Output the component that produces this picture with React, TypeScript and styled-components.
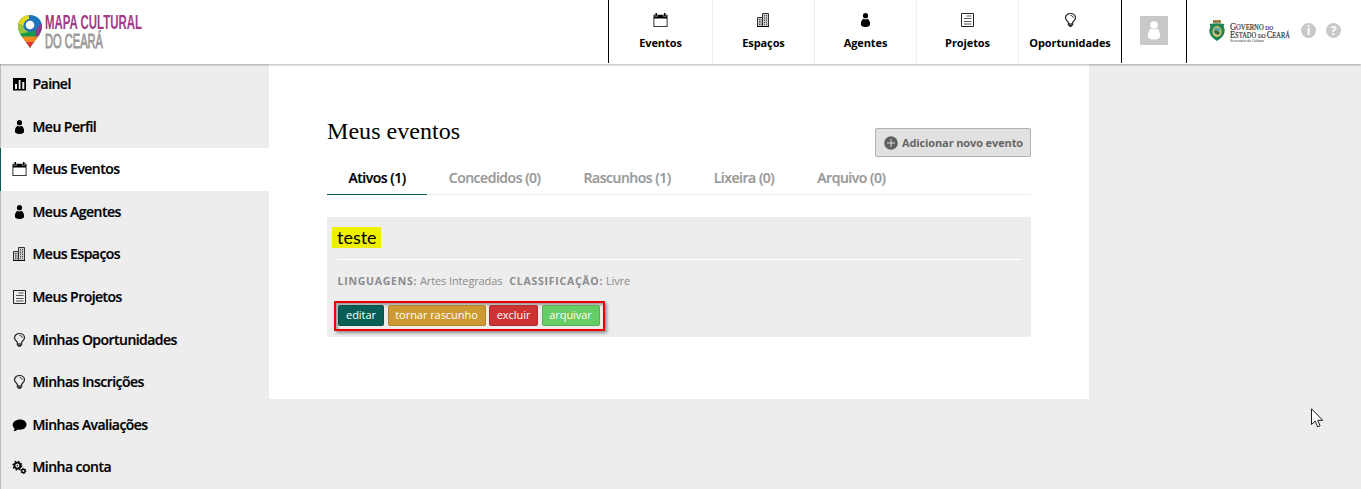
import React from 'react';
import styled, { createGlobalStyle } from 'styled-components';

const Global = createGlobalStyle`
  * { box-sizing: border-box; }
  body { margin: 0; background: #ededed; font-family: "Open Sans", sans-serif; color: #000; overflow: hidden; }
  a { color: inherit; text-decoration: none; }
  svg { display: block; flex: none; overflow: visible; }
`;

type IconName = 'event' | 'space' | 'agent' | 'project' | 'bulb' | 'panel' | 'chat' | 'gears';

const shapes: Record<IconName, React.ReactNode> = {
  event: (
    <>
      <path d="M.5 1.800h14v12.200h-14zM1.300 5.500v7.700h12.400V5.500z" fillRule="evenodd" />
      <path d="M2.500 0h1.500v3H2.500zM11 0h1.500v3H11z" />
      <path d="M1.800 1v2.300h2.900V1M10.300 1v2.300h2.900V1" fill="none" stroke="#aaa" strokeWidth=".7" />
    </>
  ),
  space: (
    <>
      <path d="M1.500 13.500V4.500H6.500V13.500M6.500 13.500V.5h6v13z" fill="#d0d0d0" stroke="#333" />
      <path d="M3.500 6v7M5 6v7M8.500 2v10M10.500 2v10" stroke="#444" strokeDasharray="1.300 1" />
      <path d="M1 13h12v1H1z" />
    </>
  ),
  agent: (
    <>
      <circle cx="7.500" cy="2.700" r="2.600" />
      <path d="M5.400 5.700c1.200.9 3 .9 4.200 0 1.600 1.100 2.500 3.200 2.500 5.300 0 2.200-1.500 3-4.600 3s-4.600-.8-4.600-3c0-2.100.9-4.200 2.500-5.300z" />
    </>
  ),
  project: (
    <>
      <path d="M1.500.5h12v13h-12z" fill="none" stroke="#222" />
      <path d="M6.500 3h5M4 5.500h7.500M4 8.500h7.500M4 11h7.500" stroke="#555" />
    </>
  ),
  bulb: (
    <>
      <path d="M5.400 9.600C4.900 8 2.500 7 2.500 4.700a5 4.200 0 0 1 10 0C12.500 7 10.100 8 9.600 9.600v2.200H5.400z" fill="none" stroke="#222" strokeWidth="1.200" />
      <path d="M7.500 2.500c1.700 0 2.600.8 2.700 2.300" fill="none" stroke="#222" />
      <path d="M5.400 10h4.200v2L8.500 14h-2l-1.100-2z" fill="#333" />
      <path d="M6.500 10.900h2.200" stroke="#ccc" strokeWidth=".8" />
    </>
  ),
  panel: (
    <path d="M1 1h13v12.500H1zM3 7v5h2V7zM6.700 3v9h1.800V3zM10.300 5v7h2V5z" fillRule="evenodd" />
  ),
  chat: (
    <path d="M8 1.500c3.900 0 6.500 2.200 6.500 5s-2.600 5.200-6.500 5.200c-.8 0-1.500-.1-2.200-.3C4.500 12.600 3 13 1.300 13c.9-.8 1.300-1.500 1.200-2.500C1.300 9.600.7 8.200.7 6.700c0-2.900 3.400-5.200 7.300-5.200z" />
  ),
  gears: (
    <>
      <circle cx="5.400" cy="5.600" r="3" fill="none" stroke="#000" strokeWidth="1.800" />
      <circle cx="5.400" cy="5.600" r="4.300" fill="none" stroke="#000" strokeWidth="1.400" strokeDasharray="1.700 1.677" />
      <circle cx="5.400" cy="5.600" r=".8" />
      <circle cx="11.400" cy="11" r="1.700" fill="none" stroke="#000" strokeWidth="1.500" />
      <circle cx="11.400" cy="11" r="2.600" fill="none" stroke="#000" strokeDasharray="1.300 1.420" />
    </>
  ),
};

const Icon = ({ name, size = 15 }: { name: IconName; size?: number }) => (
  <svg width={size} height={size} viewBox="0 0 15 15">{shapes[name]}</svg>
);

const Header = styled.header`
  position: relative;
  z-index: 2;
  display: flex;
  height: 64px;
  background: #fff;
  box-shadow: 0 1px 2px rgba(0, 0, 0, 0.3);
`;

const Brand = styled.a`
  width: 608px;
  padding: 12px 0 0 17px;
`;

const MainNav = styled.nav`
  display: flex;
  height: 63px;
  border: solid #000;
  border-width: 0 1px;
`;

const NavItem = styled.a<{ $width: number }>`
  display: flex;
  flex-direction: column;
  align-items: center;
  width: ${(p) => p.$width}px;
  padding-top: 13px;
  font-size: 11px;
  font-weight: 700;
  letter-spacing: -0.1px;
  line-height: 15px;
  gap: 7px;
  & + & { border-left: 1px solid #ededed; }
`;

const Account = styled.div`
  display: flex;
  justify-content: center;
  align-items: flex-start;
  width: 65px;
  height: 63px;
  padding-top: 16px;
  border-right: 1px solid #000;
`;

const Avatar = styled.div`
  width: 28px;
  height: 29px;
  background: #c9c9c9;
`;

const Institution = styled.div`
  display: flex;
  padding: 19px 0 0 21px;
`;

const HelpLinks = styled.div`
  display: flex;
  gap: 10px;
  padding: 4px 0 0 9px;
`;

const HelpDot = styled.a`
  display: flex;
  align-items: center;
  justify-content: center;
  width: 15px;
  height: 15px;
  border-radius: 50%;
  background: #c8c8c8;
  color: #fff;
  font-size: 12px;
  font-weight: 700;
  line-height: 15px;
`;

const Body = styled.div`
  display: flex;
  align-items: flex-start;
`;

const Sidebar = styled.nav`
  width: 269px;
  margin-top: -1.2px;
`;

const SideItem = styled.a<{ $active?: boolean }>`
  display: flex;
  align-items: center;
  gap: 6px;
  height: 42.6px;
  padding-left: 10.500px;
  border-left: 1px solid ${(p) => (p.$active ? '#085e55' : '#bdbdbd')};
  background: ${(p) => (p.$active ? '#fff' : 'transparent')};
  font-size: 14px;
  font-weight: 600;
  letter-spacing: -0.54px;
  -webkit-text-stroke: 0.2px #000;
`;

const SideIcon = styled.span`
  padding-top: 1px;
`;

const SideLabel = styled.span`
  padding-bottom: 1px;
`;

const Content = styled.main`
  width: 820px;
  height: 335px;
  padding: 51px 58px 0;
  background: #fff;
`;

const TitleBar = styled.div`
  display: flex;
  justify-content: space-between;
  height: 42px;
`;

const Title = styled.h1`
  margin: 0;
  font: 400 24px/32px "Liberation Serif", serif;
  letter-spacing: 0.05px;
`;

const AddButton = styled.a`
  display: flex;
  align-items: center;
  gap: 4px;
  width: 156px;
  height: 29px;
  margin-top: 13px;
  padding-left: 8px;
  border: 1px solid #b0b0b0;
  border-radius: 2px;
  background: #e1e1e1;
  color: #666;
  font-size: 11px;
  font-weight: 700;
  letter-spacing: -0.12px;
  white-space: nowrap;
`;

const Tabs = styled.div`
  display: flex;
  height: 38px;
  border-bottom: 1px solid #ededed;
`;

const Tab = styled.a<{ $active?: boolean }>`
  height: 38px;
  padding: 11px 21.500px 0;
  border-bottom: 1px solid ${(p) => (p.$active ? '#085e55' : 'transparent')};
  color: ${(p) => (p.$active ? '#000' : '#999')};
  font-size: 14px;
  font-weight: 600;
  letter-spacing: -0.48px;
  line-height: 19px;
  white-space: nowrap;
  -webkit-text-stroke: 0.2px currentColor;
`;

const EventCard = styled.article`
  height: 120px;
  margin-top: 22px;
  padding: 10px;
  border-radius: 2px;
  background: #ededed;
`;

const EventName = styled.h2`
  height: 33px;
  margin: 0;
  border-bottom: 1px solid #fff;
  font: 400 18px/21px Lato, sans-serif;
`;

const Highlight = styled.span`
  display: block;
  width: 49px;
  height: 21px;
  margin-left: -5px;
  padding-left: 5px;
  background: #eef000;
`;

const Meta = styled.div`
  display: flex;
  gap: 7px;
  margin-top: 13px;
  padding-left: 0.5px;
  color: #8b8b8b;
  font-size: 11px;
  line-height: 16px;
  letter-spacing: -0.12px;
  white-space: nowrap;
`;

const MetaLabel = styled.b`
  font-size: 10.500px;
  letter-spacing: 0.75px;
`;

const Actions = styled.div`
  display: flex;
  gap: 3.500px;
  width: 271px;
  height: 30px;
  margin: 12px 0 0 -3px;
  padding: 2px;
  border: 2px solid #f00000;
  box-shadow: 2px 2px 3px rgba(0, 0, 0, 0.4), inset 2px 2px 3px rgba(0, 0, 0, 0.35);
`;

const Action = styled.a<{ $color: string; $width: number }>`
  width: ${(p) => p.$width}px;
  height: 21px;
  border: 1px solid rgba(0, 0, 0, 0.13);
  border-radius: 2px;
  background: ${(p) => p.$color};
  color: #fff;
  font-size: 11px;
  line-height: 18px;
  letter-spacing: -0.05px;
  text-align: center;
  white-space: nowrap;
`;

const Pointer = styled.svg`
  position: absolute;
  left: 1311px;
  top: 408px;
`;

const navItems: [IconName, string, number][] = [
  ['event', 'Eventos', 103],
  ['space', 'Espaços', 102],
  ['agent', 'Agentes', 102],
  ['project', 'Projetos', 102],
  ['bulb', 'Oportunidades', 103],
];

const sideItems: [IconName, string][] = [
  ['panel', 'Painel'],
  ['agent', 'Meu Perfil'],
  ['event', 'Meus Eventos'],
  ['agent', 'Meus Agentes'],
  ['space', 'Meus Espaços'],
  ['project', 'Meus Projetos'],
  ['bulb', 'Minhas Oportunidades'],
  ['bulb', 'Minhas Inscrições'],
  ['chat', 'Minhas Avaliações'],
  ['gears', 'Minha conta'],
];

const tabs = ['Ativos (1)', 'Concedidos (0)', 'Rascunhos (1)', 'Lixeira (0)', 'Arquivo (0)'];

const Logo = () => (
  <svg width="160" height="44" viewBox="0 0 160 44">
    <defs>
      <clipPath id="pin">
        <path d="M13 3C6 3 1 8 1 14.500 1 22 9 29 13 36c4-7 12-14 12-21.500C25 8 20 3 13 3z" />
      </clipPath>
    </defs>
    <g clipPath="url(#pin)">
      <path d="M0 0h26v38H0z" fill="#1c75bc" />
      <path d="M0 5 12 1v6L7 13l1 9H0z" fill="#e6d81c" />
      <path d="M1 18 8 13c0 5 4 7 9 6l8-5v11H1z" fill="#159a4c" />
      <path d="M0 12h4l8 8-10 2z" fill="#9ac43c" />
      <path d="M19 18 26 9v16h-8z" fill="#8d3b8e" />
      <path d="M0 24.500h26V30H0z" fill="#f08a1d" />
      <path d="M0 30h26v8H0z" fill="#e3312a" />
      <circle cx="13" cy="13.500" r="6.500" fill="#2474b8" />
    </g>
    <circle cx="13" cy="13" r="4.300" fill="#fff" />
    <g fontFamily="Liberation Sans Narrow, Liberation Sans, sans-serif">
      <text transform="translate(28 17) scale(1 1.22)" fontSize="16" fontWeight="700" fill="#a23a86" textLength="97" lengthAdjust="spacingAndGlyphs">MAPA CULTURAL</text>
      <text transform="translate(28 36) scale(1 1.22)" fontSize="16" fill="#999" stroke="#999" strokeWidth=".7" textLength="58" lengthAdjust="spacingAndGlyphs">DO CEARÁ</text>
    </g>
  </svg>
);

const StateLogo = () => (
  <svg width="84" height="26" viewBox="0 0 84 26">
    <path d="M5 1h8v3H5z" fill="#a98b50" />
    <path d="M5 2.500h8" stroke="#6f5a30" strokeDasharray="1 1" />
    <path d="M1.500 5c5-1 10-1 15 0-1 2-1 3 0 5 1 5-2.500 9-7.500 12-5-3-8.500-7-7.500-12 1-2 1-3 0-5z" fill="#238454" />
    <ellipse cx="9" cy="12.500" rx="4.600" ry="5.400" fill="#dfc96d" />
    <ellipse cx="9" cy="12" rx="3.300" ry="3.800" fill="#65a7a0" />
    <path d="m6 13 2-2 4 3-2 2z" fill="#41613a" />
    <g fontFamily="Liberation Serif, serif" fill="#333" stroke="#333" strokeWidth=".2">
      <text x="22" y="10.500" fontSize="9.500" textLength="43" lengthAdjust="spacingAndGlyphs">G<tspan fontSize="7.500">OVERNO </tspan><tspan fontSize="6">DO</tspan></text>
      <text x="22" y="18.800" fontSize="9.500" textLength="60" lengthAdjust="spacingAndGlyphs">E<tspan fontSize="7.500">STADO </tspan><tspan fontSize="6">DO </tspan>C<tspan fontSize="7.500">EARÁ</tspan></text>
      <text x="22" y="23" fontSize="4" strokeWidth="0" textLength="34" lengthAdjust="spacingAndGlyphs">Secretaria da Cultura</text>
    </g>
  </svg>
);

export default function App() {
  return (
    <>
      <Global />
      <Header>
        <Brand href="#"><Logo /></Brand>
        <MainNav>
          {navItems.map(([icon, label, width]) => (
            <NavItem key={label} href="#" $width={width}>
              <Icon name={icon} />
              {label}
            </NavItem>
          ))}
        </MainNav>
        <Account>
          <Avatar>
            <svg width="28" height="29" viewBox="0 0 28 29" fill="#fff">
              <circle cx="14" cy="9" r="3.800" />
              <path d="M11 12.500c2 1.300 4 1.300 6 0 2 1.500 3 4.300 3 7 0 3-2 4-6 4s-6-1-6-4c0-2.700 1-5.500 3-7z" />
            </svg>
          </Avatar>
        </Account>
        <Institution>
          <StateLogo />
          <HelpLinks>
            <HelpDot href="#">i</HelpDot>
            <HelpDot href="#">?</HelpDot>
          </HelpLinks>
        </Institution>
      </Header>
      <Body>
        <Sidebar>
          {sideItems.map(([icon, label]) => (
            <SideItem key={label} href="#" $active={label === 'Meus Eventos'}>
              <SideIcon><Icon name={icon} size={15} /></SideIcon>
              <SideLabel>{label}</SideLabel>
            </SideItem>
          ))}
        </Sidebar>
        <Content>
          <TitleBar>
            <Title>Meus eventos</Title>
            <AddButton href="#">
              <svg width="14" height="14" viewBox="0 0 14 14">
                <circle cx="7" cy="7" r="6.800" fill="#606060" />
                <path d="M7 3v8M3 7h8" stroke="#ddd" />
              </svg>
              Adicionar novo evento
            </AddButton>
          </TitleBar>
          <Tabs>
            {tabs.map((label, i) => (
              <Tab key={label} href="#" $active={i === 0}>{label}</Tab>
            ))}
          </Tabs>
          <EventCard>
            <EventName><Highlight>teste</Highlight></EventName>
            <Meta>
              <span><MetaLabel>LINGUAGENS:</MetaLabel> Artes Integradas</span>
              <span><MetaLabel>CLASSIFICAÇÃO:</MetaLabel> Livre</span>
            </Meta>
            <Actions>
              <Action href="#" $color="#085e55" $width={46}>editar</Action>
              <Action href="#" $color="#cc9933" $width={98}>tornar rascunho</Action>
              <Action href="#" $color="#cc3333" $width={49}>excluir</Action>
              <Action href="#" $color="#66cc66" $width={58}>arquivar</Action>
            </Actions>
          </EventCard>
        </Content>
      </Body>
      <Pointer width="13" height="21" viewBox="0 0 13 21">
        <path d="M.5.8v15.700l3.700-3.400 2.400 5.700 2.500-1-2.400-5.500h5z" fill="#fff" stroke="#181820" />
      </Pointer>
    </>
  );
}
